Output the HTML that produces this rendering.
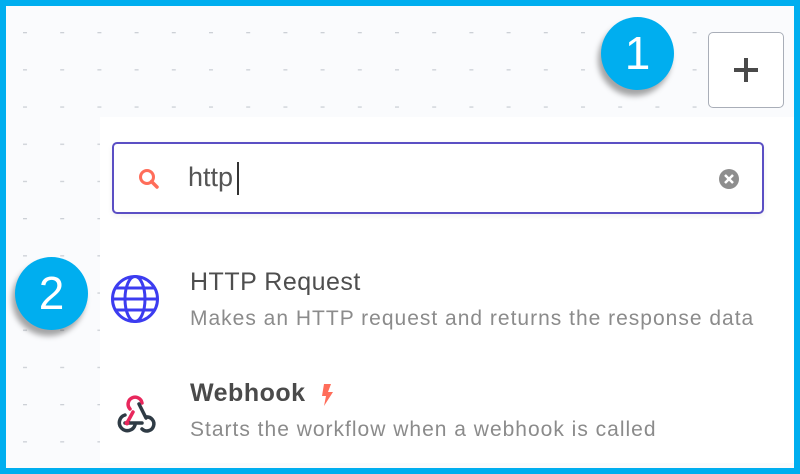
<!DOCTYPE html>
<html><head><style>
html,body{margin:0;padding:0}
body{width:800px;height:474px;position:relative;overflow:hidden;background:#00aeef;font-family:"Liberation Sans",sans-serif}
#bg{position:absolute;left:6px;top:6px;width:788px;height:462px;background:#fafbfd}
.panel{position:absolute;left:100px;top:117px;width:694px;height:346px;background:#fff}
.plus{position:absolute;left:708px;top:32px;width:74px;height:74px;border:1.5px solid #a9aeb8;border-radius:5px;background:#fff}
.circ{position:absolute;width:73px;height:73px;border-radius:50%;background:#00aeef;color:#fff;font-size:46px;text-align:center;line-height:73px;box-shadow:-3px 6px 6px rgba(0,0,0,.35)}
.search{position:absolute;left:112px;top:142px;width:648px;height:68px;border:2px solid #5b4fc4;border-radius:5px;background:#fff;box-shadow:0 2px 6px rgba(0,0,0,.06)}
.t{position:absolute;left:190px;color:#4e4e4e;font-size:25px;letter-spacing:0.5px}
.d{position:absolute;left:190px;color:#8b8b8b;font-size:21px;letter-spacing:1px}
</style></head><body>
<div id="bg"></div>
<svg style="position:absolute;left:0;top:0" width="800" height="474">
<defs><pattern id="p" x="23" y="32" width="37.2" height="37.2" patternUnits="userSpaceOnUse"><rect width="4" height="1.3" fill="#ccd0d6"/></pattern></defs>
<rect x="6" y="6" width="788" height="462" fill="url(#p)"/>
</svg>
<div class="panel"></div>
<div class="plus"><svg width="74" height="74"><path d="M37 25V49M25 37H49" stroke="#4a4a4a" stroke-width="4"/></svg></div>
<div class="circ" style="left:601px;top:17px">1</div>
<div class="circ" style="left:15px;top:257px">2</div>
<div class="search">
<svg style="position:absolute;left:24px;top:24px" width="24" height="24"><circle cx="9" cy="9" r="6.5" fill="none" stroke="#ff6d5a" stroke-width="3"/><path d="M13.5 13.5L19 19" stroke="#ff6d5a" stroke-width="3.5" stroke-linecap="round"/></svg>
<div style="position:absolute;left:74px;top:18px;font-size:27px;color:#555">http</div>
<div style="position:absolute;left:123px;top:18px;width:1.5px;height:33px;background:#333"></div>
<svg style="position:absolute;left:604px;top:24px" width="22" height="22"><circle cx="11" cy="11" r="10" fill="#8e8e8e"/><path d="M7 7L15 15M15 7L7 15" stroke="#fff" stroke-width="2.5"/></svg>
</div>
<svg style="position:absolute;left:110px;top:274px" width="52" height="52"><g fill="none" stroke="#3c3cf0" stroke-width="3"><circle cx="25" cy="25" r="22.5"/><ellipse cx="25" cy="25" rx="10" ry="22.5"/><path d="M2.5 25H47.5M5 14H45M5 36H45"/></g></svg>
<div class="t" style="top:268px">HTTP Request</div>
<div class="d" style="top:307px">Makes an HTTP request and returns the response data</div>
<svg style="position:absolute;left:112px;top:390px" width="48" height="44"><g fill="none" stroke-width="3.5" stroke-linecap="round"><path d="M21 22L15 33" stroke="#e8275c"/><path d="M13 33H30" stroke="#2f3b45"/><path d="M18 19a7 7 0 1 1 12 -6" stroke="#e8275c"/><path d="M27 14L34 28" stroke="#2f3b45"/><path d="M13 25a8 8 0 1 0 10 10" stroke="#2f3b45"/><path d="M34 27a7 7 0 1 1 -4 12" stroke="#2f3b45"/></g><circle cx="15" cy="33" r="2.5" fill="#e8275c"/></svg>
<div class="t" style="top:379px;font-weight:bold;color:#4a4a4a">Webhook</div>
<svg style="position:absolute;left:320px;top:384px" width="14" height="22"><path d="M4 0H11L8 8H13L4 22L6 12H2Z" fill="#ff6d5a"/></svg>
<div class="d" style="top:418px">Starts the workflow when a webhook is called</div>
</body></html>
